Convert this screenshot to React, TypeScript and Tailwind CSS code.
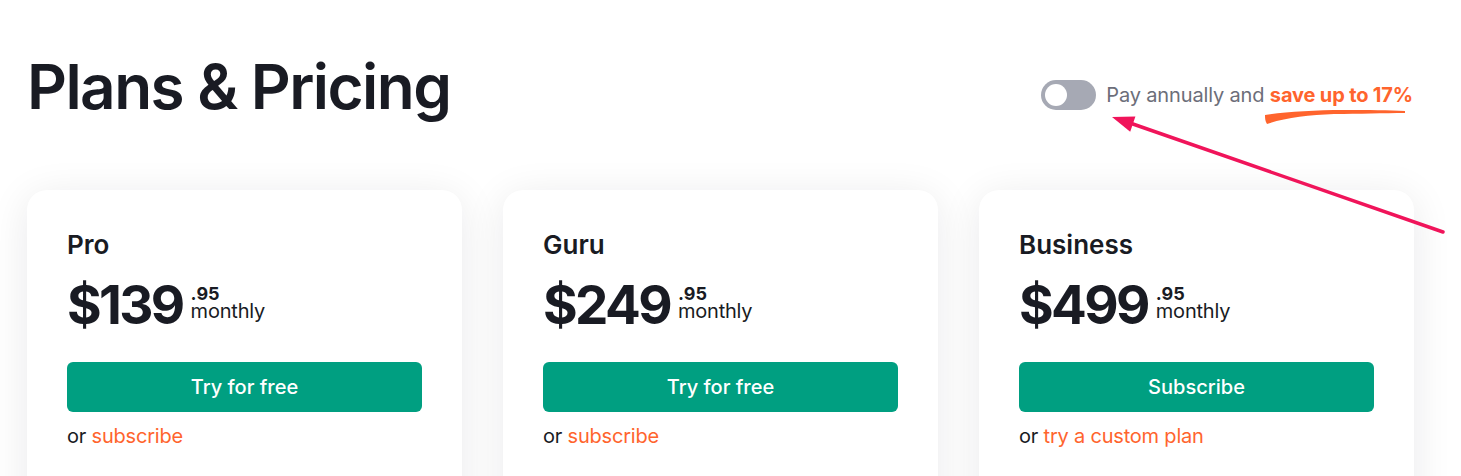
const plans = [
  { name: "Pro", price: "$139", cents: ".95", cta: "Try for free", alt: "subscribe" },
  { name: "Guru", price: "$249", cents: ".95", cta: "Try for free", alt: "subscribe" },
  { name: "Business", price: "$499", cents: ".95", cta: "Subscribe", alt: "try a custom plan" },
];

function PlanCard({ plan }: { plan: (typeof plans)[number] }) {
  return (
    <div className="bg-white rounded-[20px] shadow-[0_6px_40px_rgba(25,27,35,0.09)] px-10 pt-[39px] min-h-[420px]">
      <h2 className="text-[26px] leading-[31px] font-semibold text-[#191b23]">{plan.name}</h2>
      <div className="flex items-start mt-[18px]">
        <span className="text-[53px] leading-[54px] font-bold tracking-tighter text-[#191b23]">{plan.price}</span>
        <div className="flex flex-col ml-[8px] mt-[7px] text-[#191b23]">
          <span className="text-[18px] leading-[18px] font-bold">{plan.cents}</span>
          <span className="text-[20px] leading-[17px] tracking-[-0.2px]">monthly</span>
        </div>
      </div>
      <button className="mt-[30px] w-full h-[50px] rounded-md bg-[#009f81] text-white text-[20px] font-medium">
        {plan.cta}
      </button>
      <p className="mt-[10px] text-[20px] leading-[28px] tracking-[-0.2px] text-[#191b23]">
        or <span className="text-[#ff642d]">{plan.alt}</span>
      </p>
    </div>
  );
}

export default function App() {
  return (
    <div className="relative min-h-[476px] bg-white font-['Inter',sans-serif] overflow-hidden">
      <div className="w-[1387px] ml-[27px] pt-[56px]">
        <div className="flex items-start justify-between">
          <h1 className="text-[62px] leading-[62px] font-semibold tracking-tight text-[#191b23]">Plans &amp; Pricing</h1>
          <div className="flex items-center gap-[10px] mt-[24px] mr-[1px]">
            <div className="w-[55px] h-[30px] rounded-full bg-[#a6a9b4] p-[4px] flex items-center">
              <div className="w-[22px] h-[22px] rounded-full bg-white" />
            </div>
            <p className="text-[20px] leading-[28px] tracking-[-0.15px] text-[#6c6e79]">
              Pay annually and{" "}
              <span className="relative font-bold text-[#ff642d]">
                save up to 17%
                <svg className="absolute left-[-6px] top-[26px]" width="145" height="18" viewBox="0 0 145 18">
                  <path
                    d="M1 6 C 20 3, 50 1, 80 1 C 105 1, 125 1, 141 2 L 141 4 C 120 4, 95 5, 70 5 C 45 6, 20 9, 3 15 C 1 12, 1 9, 1 6 Z"
                    fill="#ff642d"
                  />
                </svg>
              </span>
            </p>
          </div>
        </div>
        <div className="grid grid-cols-3 gap-[41px] mt-[72px]">
          {plans.map((p) => (
            <PlanCard key={p.name} plan={p} />
          ))}
        </div>
      </div>
      <svg className="absolute left-0 top-0 pointer-events-none" width="1461" height="476">
        <line x1="1443" y1="232" x2="1130" y2="123" stroke="#f0145a" strokeWidth="3.5" strokeLinecap="round" />
        <polygon points="1112,117 1135.4,116.6 1130.2,131.8" fill="#f0145a" />
      </svg>
    </div>
  );
}
